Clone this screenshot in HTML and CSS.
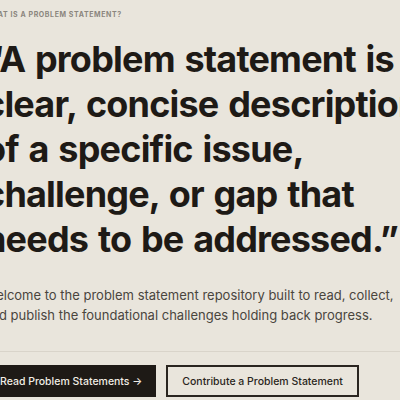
FILE: index.html
```html
<!DOCTYPE html>
<html lang="en">
<head>
<meta charset="utf-8">
<title>Problem Statements</title>
<link rel="stylesheet" href="styles.css">
</head>
<body>
<main class="hero">
  <p class="eyebrow">What is a problem statement?</p>
  <h1 class="headline">“A problem statement is a<br>clear, concise description<br>of a specific issue,<br>challenge, or gap that<br>needs to be addressed.”</h1>
  <p class="lede">Welcome to the problem statement repository built to read, collect,<br>and publish the foundational challenges holding back progress.</p>
  <div class="actions">
    <a class="btn btn-solid" href="#">Read Problem Statements →</a>
    <a class="btn btn-outline" href="#">Contribute a Problem Statement</a>
  </div>
</main>
</body>
</html>
```
FILE: styles.css
```css
html, body {
  margin: 0;
  padding: 0;
  background: #e9e5dc;
  color: #1e1a16;
  font-family: Inter, "Noto Sans", sans-serif;
  overflow: hidden;
}

.hero {
  margin-left: -16px;
  width: 480px;
  padding-top: 10px;
}

.eyebrow {
  margin: 0;
  font-size: 7px;
  font-weight: 700;
  letter-spacing: 0.6px;
  text-transform: uppercase;
  color: #8b867e;
  line-height: 10px;
}

.headline {
  margin: 17px 0 0;
  font-size: 36px;
  font-weight: 700;
  line-height: 45px;
  letter-spacing: -0.8px;
  word-spacing: 2px;
  white-space: nowrap;
}

.lede {
  margin: 24px 0 0;
  font-size: 13px;
  line-height: 19.5px;
  color: #4a453e;
  white-space: nowrap;
}

.actions {
  margin-top: 26px;
  padding-top: 13px;
  border-top: 1px solid #d9d4ca;
  display: flex;
  gap: 10px;
}

.btn {
  display: inline-flex;
  align-items: center;
  height: 32px;
  box-sizing: border-box;
  font-size: 10.5px;
  font-weight: 500;
  text-decoration: none;
  white-space: nowrap;
}

.btn-solid {
  background: #1e1a16;
  color: #f1ede5;
  padding: 0 14px 0 16px;
}

.btn-outline {
  border: 2px solid #2a2520;
  color: #2a2520;
  padding: 0 14px;
}
```
